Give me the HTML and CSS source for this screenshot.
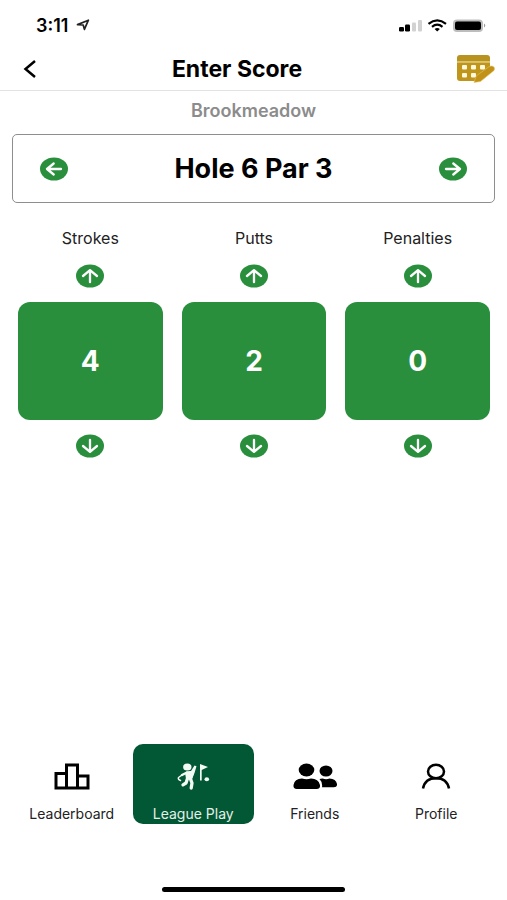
FILE: index.html
```html
<!DOCTYPE html>
<html lang="en">
<head>
<meta charset="utf-8">
<meta name="viewport" content="width=device-width, initial-scale=1">
<title>Enter Score</title>
<link rel="stylesheet" href="styles.css">
</head>
<body>
<svg class="defs" aria-hidden="true">
  <symbol id="arrow" viewBox="0 0 28 24">
    <ellipse cx="14" cy="12" rx="14" ry="11.5" fill="#2a8f3d"/>
    <path d="M14 18.2V6.5M7 12l7-5.8L21 12" fill="none" stroke="#fff" stroke-width="2.3" stroke-linecap="round" stroke-linejoin="round"/>
  </symbol>
  <symbol id="arrow-side" viewBox="0 0 28 24">
    <ellipse cx="14" cy="12" rx="14" ry="11.5" fill="#2a8f3d"/>
    <path d="M7 12h14M14.3 6.5L21 12l-6.7 5.5" fill="none" stroke="#fff" stroke-width="2.3" stroke-linecap="round" stroke-linejoin="round"/>
  </symbol>
</svg>
<div class="app">
  <div class="status">
    <div class="clock">
      <span>3:11</span>
      <svg width="14" height="12" viewBox="0 0 14 12"><path d="M1.5 5.6L12.4 1.2 8.4 10.4 7.2 6z" fill="none" stroke="#222" stroke-width="1.7" stroke-linejoin="round"/></svg>
    </div>
    <svg width="88" height="16" viewBox="0 0 88 16">
      <rect x="0" y="10" width="5" height="4.5" rx="1.3" fill="#000"/>
      <rect x="6" y="7.5" width="5" height="7" rx="1.2" fill="#000"/>
      <rect x="13" y="5.5" width="4" height="9" rx="1" fill="#d2d2d2"/>
      <rect x="19" y="3" width="4" height="11.5" rx="1" fill="#d2d2d2"/>
      <g fill="none" stroke="#000" stroke-width="2.2">
        <path d="M29.5 6.8Q38.2 0 47 6.8"/>
        <path d="M33 9.8Q38.2 5.6 43.5 9.8"/>
      </g>
      <path d="M35.6 12Q38.2 10 40.9 12L38.2 14.5z"/>
      <rect x="54" y="2.5" width="30" height="12.5" rx="4" fill="#bdbdbd"/>
      <rect x="56" y="4.5" width="26" height="8.5" rx="2" fill="#000"/>
      <path d="M85 6.5q2.6 2 0 4z" fill="#999"/>
    </svg>
  </div>
  <header class="header">
    <button class="icon-button" aria-label="Back">
      <svg width="14" height="20" viewBox="0 0 14 20"><path d="M12 2L2.5 10l9.5 8" fill="none" stroke="#000" stroke-width="2.5"/></svg>
    </button>
    <h1 class="title">Enter Score</h1>
    <button class="icon-button" aria-label="Scorecard">
      <svg width="38" height="30" viewBox="0 0 38 30">
        <path d="M0 7V4q0-3 3-3h27q3 0 3 3v3z" fill="#b8931f"/>
        <path d="M0 7h33v1.500H0z" fill="#dcc26a"/>
        <path d="M0 8.500h33v5L18 27H3q-3 0-3-3z" fill="#bf951c"/>
        <g fill="#fff8dc"><rect x="5" y="11" width="5" height="4.500" rx="1"/><rect x="14" y="11" width="5" height="4.500" rx="1"/><rect x="23" y="11" width="5" height="4.500" rx="1"/><rect x="5" y="19" width="5" height="4.500" rx="1"/><rect x="14" y="19" width="5" height="4.500" rx="1"/></g>
        <path d="M17 28.500l2.200-6.500L32 12.600q2-1.200 4-.3 2.500 1.300 1 4.300L23.500 27.500z" fill="#c29118" stroke="#e4c66d" stroke-width=".6"/>
      </svg>
    </button>
  </header>
  <main class="main">
    <p class="course">Brookmeadow</p>
    <section class="hole">
      <button class="round" aria-label="Previous hole"><svg class="flip-x"><use href="#arrow-side"/></svg></button>
      <h2 class="hole-name">Hole 6 Par 3</h2>
      <button class="round" aria-label="Next hole"><svg><use href="#arrow-side"/></svg></button>
    </section>
    <section class="counters">
      <div class="counter">
        <span class="label">Strokes</span>
        <button class="round" aria-label="More strokes"><svg><use href="#arrow"/></svg></button>
        <output class="value">4</output>
        <button class="round" aria-label="Fewer strokes"><svg class="flip-y"><use href="#arrow"/></svg></button>
      </div>
      <div class="counter">
        <span class="label">Putts</span>
        <button class="round" aria-label="More putts"><svg><use href="#arrow"/></svg></button>
        <output class="value">2</output>
        <button class="round" aria-label="Fewer putts"><svg class="flip-y"><use href="#arrow"/></svg></button>
      </div>
      <div class="counter">
        <span class="label">Penalties</span>
        <button class="round" aria-label="More penalties"><svg><use href="#arrow"/></svg></button>
        <output class="value">0</output>
        <button class="round" aria-label="Fewer penalties"><svg class="flip-y"><use href="#arrow"/></svg></button>
      </div>
    </section>
  </main>
  <nav class="tabs">
    <a class="tab" href="#leaderboard">
      <svg width="44" height="28" viewBox="0 0 44 28"><path d="M6 11.5H16.5V26H6zM16.5 3H27.5V26H16.5zM27.5 14H38V26H27.5z" fill="none" stroke="#000" stroke-width="3"/></svg>
      <span>Leaderboard</span>
    </a>
    <a class="tab active" href="#league" aria-current="page">
      <svg width="44" height="28" viewBox="0 0 44 28" fill="#f4faf5">
        <ellipse cx="16.300" cy="5" rx="4.200" ry="3.500"/>
        <path d="M15 9.500L20 9l3.500-5.500 2 .8L23.500 11l-2 5z"/>
        <path d="M14 10.500L20 9l2.500 3-1.500 6-6-1z"/>
        <g fill="none" stroke="#f4faf5" stroke-linecap="round" stroke-linejoin="round">
          <path d="M16 10.500L11 13" stroke-width="2.500"/>
          <path d="M11 13l-3.500 2.500q-.8 2 2 3" stroke-width="1.500"/>
          <path d="M16.500 16.500l-1.500 4.500-3 1.800M19.500 17l1.500 4-.8 5" stroke-width="3.300"/>
        </g>
        <path d="M29 2l8 3-6.300 3v10.500H29z"/><ellipse cx="35.800" cy="17.200" rx="2.300" ry="2"/>
      </svg>
      <span>League Play</span>
    </a>
    <a class="tab" href="#friends">
      <svg width="44" height="28" viewBox="0 0 44 28">
        <ellipse cx="13.500" cy="8" rx="7.800" ry="6.500"/><ellipse cx="33" cy="9" rx="6.500" ry="5.500"/>
        <path d="M4 27q-4 0-3.500-4Q1.500 16.500 9 16.500q4.500 1.500 9 0 7.500 0 9 6.500.5 4-3.500 4z"/>
        <path d="M26.500 17q1-.5 3.200-.5 3.300 1.300 6.800 0 6.500.4 7.500 5.500.4 3.300-3.200 3.300H29q.8-5-2.500-8.300z"/>
      </svg>
      <span>Friends</span>
    </a>
    <a class="tab" href="#profile">
      <svg width="44" height="28" viewBox="0 0 44 28" fill="none" stroke="#000" stroke-width="2.500"><ellipse cx="22" cy="9.500" rx="8" ry="6.700"/><path d="M9 26.500Q11 16.200 22 16.200T35 26.500"/></svg>
      <span>Profile</span>
    </a>
  </nav>
  <div class="home"></div>
</div>
</body>
</html>
```
FILE: styles.css
```css
* { box-sizing: border-box; }

body {
  margin: 0;
  background: #fff;
  color: #000;
  font-family: Inter, "Liberation Sans", sans-serif;
}

button {
  display: flex;
  padding: 0;
  border: 0;
  background: none;
  cursor: pointer;
}

svg { display: block; }
.defs { position: absolute; width: 0; height: 0; }

.app {
  display: flex;
  flex-direction: column;
  min-height: 100vh;
}

.status {
  display: flex;
  align-items: center;
  justify-content: space-between;
  height: 48px;
  padding: 2px 20px 0 36px;
}

.clock {
  display: flex;
  align-items: center;
  gap: 8px;
  font-size: 18px;
  font-weight: 600;
}

.header {
  display: flex;
  align-items: center;
  justify-content: space-between;
  height: 43px;
  padding: 0 12px 0 23px;
  border-bottom: 1px solid #e2e2e2;
}

.title {
  margin: 0;
  padding-right: 20px;
  font-size: 23px;
  font-weight: 700;
  line-height: 28px;
}

.course {
  margin: 9px 0 12px;
  color: #8c8c8c;
  font-size: 18px;
  font-weight: 600;
  line-height: 22px;
  text-align: center;
}

.hole {
  display: flex;
  align-items: center;
  justify-content: space-between;
  height: 69px;
  margin: 0 12px;
  padding: 0 27px;
  border: 1px solid #8e8e8e;
  border-radius: 5px;
}

.hole-name {
  margin: 0;
  font-size: 27px;
  font-weight: 700;
  line-height: 32px;
}

.round svg { width: 28px; height: 24px; }
.flip-x { transform: scaleX(-1); }
.flip-y { transform: scaleY(-1); }

.counters {
  display: grid;
  grid-template-columns: repeat(3, 1fr);
  gap: 19px;
  margin-top: 25px;
  padding: 0 17px 0 18px;
}

.counter {
  display: flex;
  flex-direction: column;
  align-items: center;
  gap: 14px;
}

.label {
  margin-bottom: 2px;
  color: #222;
  font-size: 16px;
  line-height: 20px;
}

.value {
  display: flex;
  align-items: center;
  justify-content: center;
  align-self: stretch;
  height: 118px;
  border-radius: 12px;
  background: #2a8f3d;
  color: #fff;
  font-size: 28px;
  font-weight: 700;
}

.tabs {
  display: grid;
  grid-template-columns: repeat(4, 1fr);
  margin-top: auto;
  padding: 0 10px 0 11px;
}

.tab {
  display: flex;
  flex-direction: column;
  align-items: center;
  justify-content: space-between;
  height: 80px;
  padding-top: 18px;
  border-radius: 10px;
  color: #222;
  font-size: 14px;
  line-height: 20px;
  text-decoration: none;
}

.active {
  background: #025735;
  color: #e3f0e8;
}

.home {
  width: 36%;
  height: 5px;
  margin: 63px auto 8px;
  border-radius: 3px;
  background: #000;
}
```
